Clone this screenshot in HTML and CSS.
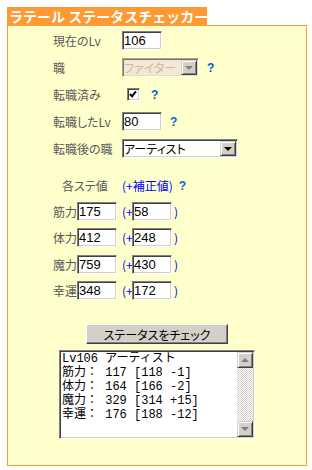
FILE: index.html
```html
<!DOCTYPE html>
<html lang="ja">
<head>
    <meta charset="UTF-8">
    <meta name="viewport" content="width=device-width, initial-scale=1.0">
    <title>ラテール ステータスチェッカー</title>
    <link rel="stylesheet" href="styles.css">
</head>
<body>

<div class="page">
    <div class="tab">ラテール ステータスチェッカー</div>
    <div class="box">
        <div class="form">
            <label>現在のLv</label>
            <div class="cell"><input type="text" class="num" value="106"></div>

            <label>職</label>
            <div class="cell">
                <span class="sel sel-off" style="width: 77px">
                    <select disabled><option>ファイター</option></select>
                    <span class="arrow"></span>
                </span>
                <span class="help">?</span>
            </div>

            <label>転職済み</label>
            <div class="cell"><input type="checkbox" class="chk" checked><span class="help">?</span></div>

            <label>転職したLv</label>
            <div class="cell"><input type="text" class="num" value="80"><span class="help">?</span></div>

            <label>転職後の職</label>
            <div class="cell">
                <span class="sel" style="width: 116px">
                    <select><option>アーティスト</option></select>
                    <span class="arrow"></span>
                </span>
            </div>
        </div>

        <div class="stats">
            <div class="stats-head">
                <span class="head-label">各ステ値</span>
                <span class="blue">(+補正値)</span>
                <span class="help">?</span>
            </div>
            <div class="stat-row">
                <span class="stat-label">筋力</span><input type="text" class="num" value="175">
                <span class="blue open">(+</span><input type="text" class="num" value="58"><span class="blue close">)</span>
            </div>
            <div class="stat-row">
                <span class="stat-label">体力</span><input type="text" class="num" value="412">
                <span class="blue open">(+</span><input type="text" class="num" value="248"><span class="blue close">)</span>
            </div>
            <div class="stat-row">
                <span class="stat-label">魔力</span><input type="text" class="num" value="759">
                <span class="blue open">(+</span><input type="text" class="num" value="430"><span class="blue close">)</span>
            </div>
            <div class="stat-row">
                <span class="stat-label">幸運</span><input type="text" class="num" value="348">
                <span class="blue open">(+</span><input type="text" class="num" value="172"><span class="blue close">)</span>
            </div>
        </div>

        <div class="actions">
            <button class="check-btn">ステータスをチェック</button>
        </div>

        <div class="result">
            <textarea readonly>Lv106 アーティスト
筋力： 117 [118 -1]
体力： 164 [166 -2]
魔力： 329 [314 +15]
幸運： 176 [188 -12]</textarea>
            <div class="scroll">
                <span class="sbtn up"></span>
                <span class="track"></span>
                <span class="sbtn down"></span>
            </div>
        </div>
    </div>
</div>

</body>
</html>
```

FILE: styles.css
```css
body {
    margin: 0;
    background-color: #ffffff;
    font-family: "Noto Sans CJK JP", sans-serif;
    font-size: 12px;
    font-feature-settings: "palt";
}
.page {
    padding: 7px 0 0 7px;
    width: 300px;
}
.tab {
    width: 198px;
    height: 18px;
    padding-left: 2px;
    background-color: #ff9933;
    color: #ffffff;
    font-size: 14px;
    font-weight: bold;
    font-feature-settings: normal;
    line-height: 18px;
    white-space: nowrap;
}
.box {
    height: 439px;
    border: 1px solid #ff9933;
    background-color: #ffffcc;
}
.form {
    display: grid;
    grid-template-columns: 69px auto;
    grid-auto-rows: 27px;
    align-items: center;
    padding: 1px 0 0 45px;
}
.form label,
.stat-label,
.head-label {
    color: #595959;
}
.cell {
    display: flex;
    align-items: center;
}
.num {
    box-sizing: border-box;
    width: 40px;
    height: 19px;
    padding: 0 1px;
    border: 1px solid;
    border-color: #808080 #ffffff #ffffff #808080;
    box-shadow: inset 1px 1px #404040, inset -1px -1px #d4d0c8;
    background-color: #ffffff;
    font-family: "Liberation Sans", sans-serif;
    font-size: 13px;
    color: #000000;
    outline: none;
}
.help {
    margin-left: 8px;
    color: #0066cc;
    font-family: "Liberation Sans", sans-serif;
    font-weight: bold;
    font-size: 12px;
}
.chk {
    appearance: none;
    position: relative;
    box-sizing: border-box;
    width: 13px;
    height: 13px;
    margin: 0 3px 0 5px;
    border: 1px solid;
    border-color: #808080 #ffffff #ffffff #808080;
    box-shadow: inset 1px 1px #404040, inset -1px -1px #d4d0c8;
    background-color: #ffffff;
}
.chk:checked::after {
    content: "";
    position: absolute;
    left: 3px;
    top: 1px;
    width: 2px;
    height: 5px;
    border-right: 2px solid #000000;
    border-bottom: 2px solid #000000;
    transform: rotate(40deg);
}
.sel {
    position: relative;
    display: inline-block;
    height: 19px;
}
.sel select {
    appearance: none;
    box-sizing: border-box;
    width: 100%;
    height: 100%;
    padding: 0 1px;
    border: 1px solid;
    border-color: #808080 #ffffff #ffffff #808080;
    box-shadow: inset 1px 1px #404040, inset -1px -1px #d4d0c8;
    background-color: #ffffff;
    font-family: "Noto Sans CJK JP", sans-serif;
    font-size: 12px;
    font-feature-settings: "palt";
    color: #000000;
    border-radius: 0;
    outline: none;
}
.arrow {
    position: absolute;
    right: 2px;
    top: 2px;
    box-sizing: border-box;
    width: 16px;
    height: 15px;
    border: 1px solid;
    border-color: #d4d0c8 #404040 #404040 #d4d0c8;
    box-shadow: inset 1px 1px #ffffff, inset -1px -1px #808080;
    background-color: #d4d0c8;
}
.arrow::after {
    content: "";
    position: absolute;
    left: 3px;
    top: 5px;
    border-left: 4px solid transparent;
    border-right: 4px solid transparent;
    border-top: 4px solid #000000;
}
.sel-off select {
    background-color: #f2ddd6;
    color: #a9a19e;
}
.sel-off .arrow::after {
    border-top-color: #808080;
}
.stats {
    margin-top: 11px;
}
.stats-head {
    display: flex;
    align-items: center;
    height: 25px;
    padding-left: 54px;
}
.head-label {
    width: 60px;
}
.blue {
    color: #0000ff;
}
.stats-head .help {
    margin-left: 6px;
}
.stat-row {
    display: flex;
    align-items: center;
    height: 26.5px;
    padding-left: 45px;
}
.stat-label {
    width: 24px;
}
.open {
    width: 10px;
    margin-left: 5px;
}
.close {
    margin-left: 2px;
}
.actions {
    display: flex;
    justify-content: center;
    margin-top: 20px;
}
.check-btn {
    box-sizing: border-box;
    width: 142px;
    height: 20px;
    padding: 0;
    border: 1px solid;
    border-color: #ffffff #404040 #404040 #ffffff;
    box-shadow: inset -1px -1px #808080;
    background-color: #d4d0c8;
    font-family: "Noto Sans CJK JP", sans-serif;
    font-size: 12px;
    font-feature-settings: "palt";
    color: #000000;
}
.result {
    display: flex;
    box-sizing: border-box;
    width: 196px;
    height: 89px;
    margin: 6px auto 0;
    padding: 1px;
    border: 1px solid;
    border-color: #808080 #ffffff #ffffff #808080;
    box-shadow: inset 1px 1px #404040, inset -1px -1px #d4d0c8;
    background-color: #ffffff;
}
.result textarea {
    flex: 1;
    margin: 0;
    padding: 0 0 0 1px;
    border: none;
    resize: none;
    overflow: hidden;
    font-family: "Liberation Mono", "Noto Sans CJK JP", monospace;
    font-size: 12px;
    line-height: 14px;
    color: #000000;
    outline: none;
}
.scroll {
    display: flex;
    flex-direction: column;
    width: 16px;
}
.track {
    flex: 1;
    background: repeating-conic-gradient(#d4d0c8 0 25%, #ffffff 0 50%) 0 0 / 2px 2px;
}
.sbtn {
    position: relative;
    box-sizing: border-box;
    height: 16px;
    border: 1px solid;
    border-color: #d4d0c8 #404040 #404040 #d4d0c8;
    box-shadow: inset 1px 1px #ffffff, inset -1px -1px #808080;
    background-color: #d4d0c8;
}
.sbtn::after {
    content: "";
    position: absolute;
    left: 3px;
    top: 5px;
    border-left: 4px solid transparent;
    border-right: 4px solid transparent;
}
.up::after {
    border-bottom: 4px solid #808080;
}
.down::after {
    border-top: 4px solid #808080;
}
```
